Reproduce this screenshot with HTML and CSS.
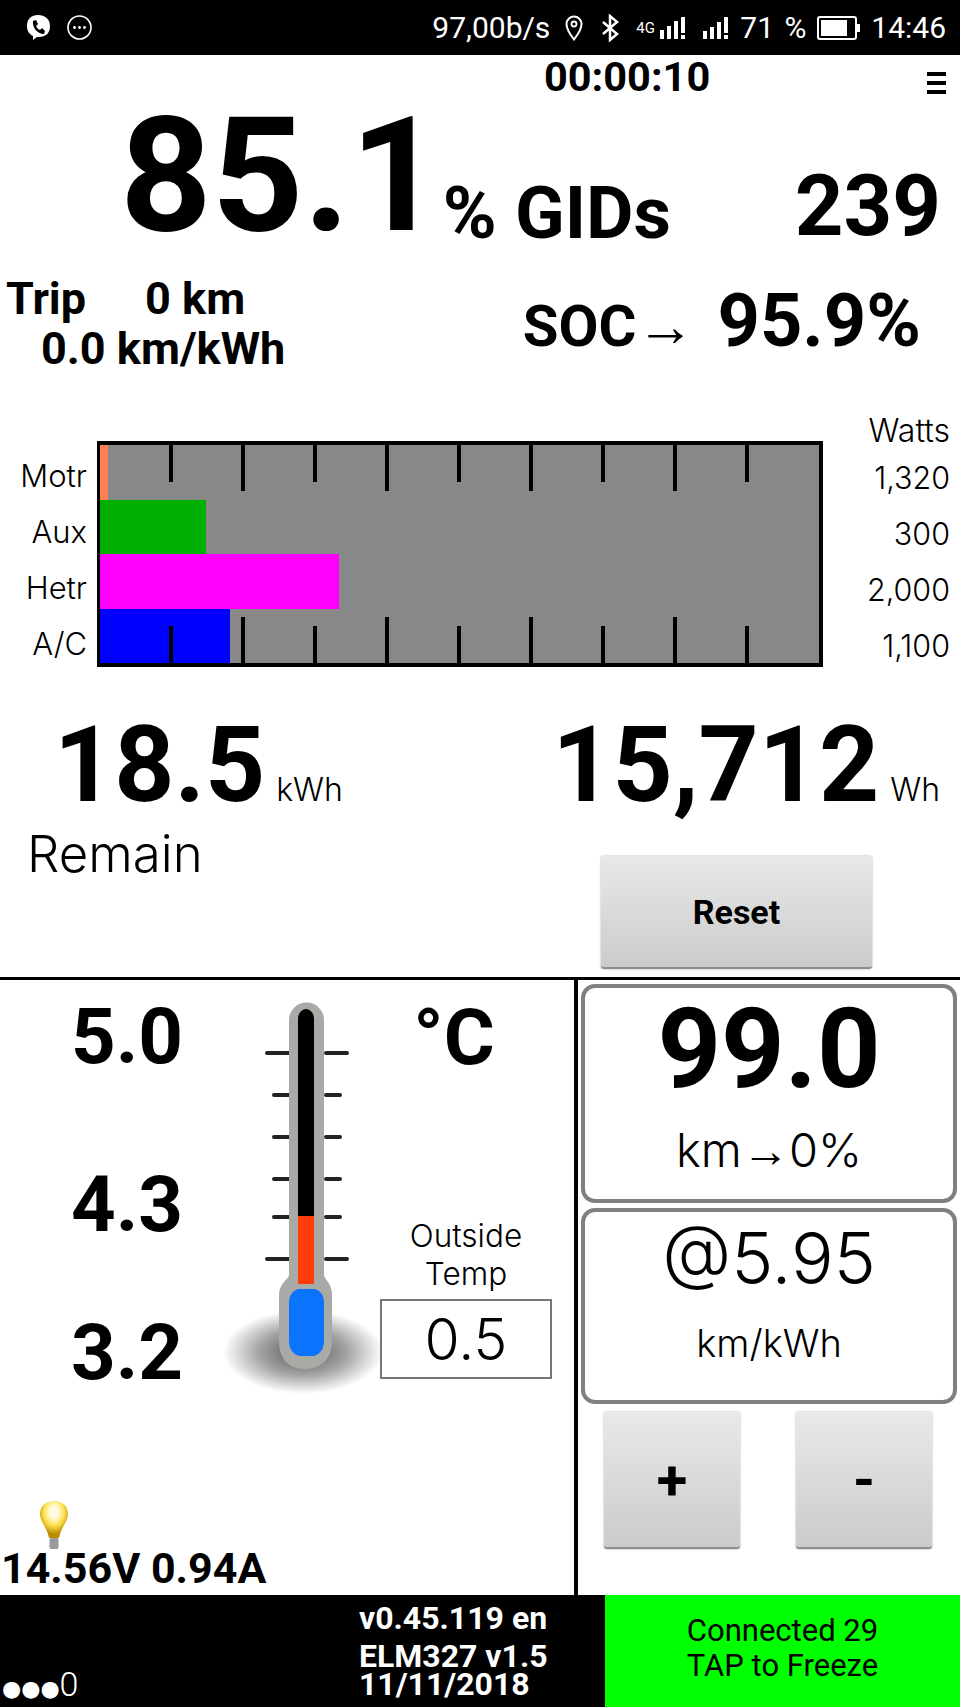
FILE: index.html
```html
<!DOCTYPE html>
<html lang="en">
  <head>
    <meta charset="UTF-8" />
    <title>LeafSpy dash</title>
    <link rel="stylesheet" href="styles.css">
  </head>
  <body>
    <div class="screen">
      <div class="status">
        <svg class="status-app" viewBox="0 0 27 27">
          <path d="M13 1C6 1 2 5 2 12c0 5 2 8 6 10v4l4-3h2c7 0 11-4 11-11S20 1 13 1z" fill="#fff"/>
          <path d="M8 7l3-1 2 4-2 2c1 2 2 3 4 4l2-2 3 3-1 3c-6 0-12-6-11-13z" fill="#000"/>
        </svg>
        <svg class="status-app" viewBox="0 0 27 27">
          <circle cx="13.5" cy="13.5" r="11.5" fill="none" stroke="#fff" stroke-width="1.6"/>
          <circle cx="8.5" cy="13.5" r="1.4" fill="#fff"/>
          <circle cx="13.5" cy="13.5" r="1.4" fill="#fff"/>
          <circle cx="18.5" cy="13.5" r="1.4" fill="#fff"/>
        </svg>
        <div class="status-right">
          <span class="speed">97,00b/s</span>
          <svg class="icon-pin" viewBox="0 0 18 26">
            <path d="M9 1.500a7.500 7.500 0 0 0-7.500 7.500C1.500 15 9 24.500 9 24.500S16.500 15 16.500 9A7.500 7.500 0 0 0 9 1.500z" fill="none" stroke="#fff" stroke-width="2"/>
            <circle cx="9" cy="9" r="2.500" fill="none" stroke="#fff" stroke-width="1.800"/>
          </svg>
          <svg class="icon-bt" viewBox="0 0 20 28">
            <path d="M3 8l14 12-7 6V2l7 6L3 20" fill="none" stroke="#fff" stroke-width="2.500"/>
          </svg>
          <span class="net">4G</span>
          <svg class="icon-signal" viewBox="0 0 72 24">
            <g fill="#fff">
              <rect x="0" y="14" width="4" height="9"/><rect x="7" y="10" width="4" height="13"/>
              <rect x="14" y="5" width="4" height="18"/><rect x="21" y="1" width="4" height="16"/>
              <rect x="21" y="19" width="4" height="4"/>
              <rect x="43" y="15" width="4" height="8"/><rect x="50" y="11" width="4" height="12"/>
              <rect x="57" y="6" width="4" height="17"/><rect x="64" y="1" width="4" height="16"/>
              <rect x="64" y="19" width="4" height="4"/>
            </g>
          </svg>
          <span class="pct">71 %</span>
          <svg class="icon-batt" viewBox="0 0 44 24">
            <rect x="1" y="1" width="38" height="22" rx="2" fill="none" stroke="#fff" stroke-width="2"/>
            <rect x="4" y="4" width="26" height="16" fill="#fff"/>
            <rect x="40" y="8" width="3" height="8" fill="#fff"/>
          </svg>
          <span class="clock">14:46</span>
        </div>
      </div>

      <div class="upper">
        <div class="timer-row">
          <span class="timer">00:00:10</span>
          <div class="menu"><i></i><i></i><i></i></div>
        </div>

        <div class="gids-row">
          <span class="gids-pct">85.1</span>
          <span class="gids-label">% GIDs</span>
          <span class="gids-num">239</span>
        </div>

        <div class="trip-row">
          <div class="trip">
            <div class="trip-top"><span>Trip</span><span>0 km</span></div>
            <div class="trip-eff">0.0 km/kWh</div>
          </div>
          <div class="soc">
            <span class="soc-label">SOC→</span>
            <span class="soc-val">95.9%</span>
          </div>
        </div>

        <div class="watts-title">Watts</div>
        <div class="power">
          <div class="power-labels">
            <span>Motr</span><span>Aux</span><span>Hetr</span><span>A/C</span>
          </div>
          <div class="chart">
            <div class="bar bar-motr"></div>
            <div class="bar bar-aux"></div>
            <div class="bar bar-hetr"></div>
            <div class="bar bar-ac"></div>
            <div class="ticks ticks-top">
              <i></i><i class="long"></i><i></i><i class="long"></i><i></i><i class="long"></i><i></i><i class="long"></i><i></i>
            </div>
            <div class="ticks ticks-bottom">
              <i></i><i class="long"></i><i></i><i class="long"></i><i></i><i class="long"></i><i></i><i class="long"></i><i></i>
            </div>
          </div>
          <div class="power-values">
            <span>1,320</span><span>300</span><span>2,000</span><span>1,100</span>
          </div>
        </div>

        <div class="energy-row">
          <div class="energy energy-left"><b>18.5</b><span>kWh</span></div>
          <div class="energy energy-right"><b>15,712</b><span>Wh</span></div>
        </div>

        <div class="remain-row">
          <span class="remain">Remain</span>
          <button class="btn btn-reset">Reset</button>
        </div>
      </div>

      <div class="lower">
        <div class="lower-left">
          <div class="temps">
            <span>5.0</span><span>4.3</span><span>3.2</span>
          </div>
          <svg class="thermo" viewBox="0 0 170 400">
            <defs>
              <radialGradient id="shade">
                <stop offset="0" stop-color="#555"/>
                <stop offset="0.55" stop-color="#a4a4a4"/>
                <stop offset="1" stop-color="#fff"/>
              </radialGradient>
            </defs>
            <ellipse cx="83" cy="357" rx="80" ry="42" fill="url(#shade)"/>
            <g stroke="#222" stroke-width="4" stroke-linecap="round">
              <path d="M47 58H69M106 58H127"/>
              <path d="M54 100H69M106 100H120"/>
              <path d="M54 142H69M106 142H120"/>
              <path d="M54 184H69M106 184H120"/>
              <path d="M54 222H69M106 222H120"/>
              <path d="M47 264H69M106 264H127"/>
            </g>
            <path d="M69 25a17.500 17.500 0 0 1 35 0V280c0 4 8 8 8 20v46c0 17-10 28-27 28h-1c-16 0-25-11-25-28v-46c0-12 10-16 10-20z" fill="#a9a9a6"/>
            <path d="M78 24c0-6 4-10 8-10s8 4 8 10V221H78z" fill="#000"/>
            <rect x="78" y="221" width="16" height="68" fill="#ff3c0a"/>
            <path d="M78 294h17c6 2 9 7 9 14v38c0 8-4 13-10 15H79c-6-2-10-7-10-15v-38c0-7 3-12 9-14z" fill="#0a74ff"/>
          </svg>
          <div class="outside">
            <div class="deg">°C</div>
            <div class="outside-label">Outside<br>Temp</div>
            <div class="outside-box">0.5</div>
          </div>
          <div class="volts">
            <svg class="bulb" viewBox="0 0 30 50">
              <defs>
                <radialGradient id="glow" cx="0.5" cy="0.3" r="0.6">
                  <stop offset="0.25" stop-color="#fffbe0"/>
                  <stop offset="0.6" stop-color="#ffe14d"/>
                  <stop offset="1" stop-color="#b98c00"/>
                </radialGradient>
              </defs>
              <path d="M15 1C7 1 1 6 1 14c0 8 7 13 9 24h10c2-11 9-16 9-24C29 6 23 1 15 1z" fill="url(#glow)"/>
              <rect x="10.500" y="38" width="9" height="11" rx="2" fill="#9a9a9a"/>
            </svg>
            <div class="volts-text">14.56V 0.94A</div>
          </div>
        </div>
        <div class="lower-right">
          <div class="card card-range">
            <div class="range-num">99.0</div>
            <div class="range-sub">km<span class="arrow">→</span>0%</div>
          </div>
          <div class="card card-eff">
            <div class="eff-num">@5.95</div>
            <div class="eff-sub">km/kWh</div>
          </div>
          <div class="plusminus">
            <button class="btn btn-sq">+</button>
            <button class="btn btn-sq">-</button>
          </div>
        </div>
      </div>

      <div class="footer">
        <div class="dots">●●●<span>0</span></div>
        <div class="version">
          <div class="ver-line">v0.45.119 en</div>
          <div class="elm-line">ELM327 v1.5</div>
          <div class="date-line">11/11/2018</div>
        </div>
        <div class="conn">Connected 29<br>TAP to Freeze</div>
      </div>
    </div>
  </body>
</html>
```

FILE: styles.css
```css
* {
  box-sizing: border-box;
  margin: 0;
  padding: 0;
}

body {
  background-color: #fff;
  color: #000;
  font-family: Roboto, "Liberation Sans", sans-serif;
}

.screen {
  width: 960px;
  height: 1707px;
  display: flex;
  flex-direction: column;
  overflow: hidden;
}

/* status bar */
.status {
  height: 55px;
  background-color: #000;
  color: #fff;
  display: flex;
  align-items: center;
  padding-left: 25px;
  gap: 14px;
}

.status-app {
  width: 27px;
  height: 27px;
}

.status-right {
  margin-left: auto;
  padding-right: 14px;
  display: flex;
  align-items: center;
  font-size: 30px;
  white-space: nowrap;
}

.speed {
  width: 133px;
}

.icon-pin {
  width: 18px;
  height: 26px;
}

.icon-bt {
  width: 20px;
  height: 28px;
  margin-left: 17px;
}

.net {
  font-size: 15px;
  margin-left: 16px;
  width: 24px;
}

.icon-signal {
  width: 72px;
  height: 24px;
}

.pct {
  width: 69px;
  margin-left: 8px;
  word-spacing: 3px;
}

.icon-batt {
  width: 44px;
  height: 24px;
  margin-left: 8px;
}

.clock {
  margin-left: 10px;
}

/* upper panel */
.upper {
  height: 925px;
  border-bottom: 3px solid #000;
}

.timer-row {
  height: 40px;
  position: relative;
  padding: 2px 0 0 544px;
}

.timer {
  font-size: 41.5px;
  font-weight: 700;
  line-height: 40px;
}

.menu {
  position: absolute;
  top: 17px;
  right: 14px;
  width: 19px;
  display: flex;
  flex-direction: column;
  gap: 5px;
}

.menu i {
  height: 4px;
  background-color: #000;
}

.gids-row {
  height: 160px;
  display: flex;
  align-items: flex-start;
  padding-left: 120px;
  font-weight: 700;
}

.gids-pct {
  font-size: 160px;
  line-height: 160px;
  margin-top: 1px;
}

.gids-label {
  font-size: 73px;
  line-height: 73px;
  margin: 82px 0 0 1px;
}

.gids-num {
  font-size: 85px;
  line-height: 85px;
  margin: 69px 19px 0 auto;
}

.trip-row {
  height: 167px;
  display: flex;
  font-weight: 700;
}

.trip {
  font-size: 45px;
  padding-left: 6px;
  padding-top: 19px;
}

.trip-top {
  display: flex;
  gap: 59px;
  line-height: 50px;
}

.trip-eff {
  padding-left: 35px;
  line-height: 50px;
}

.soc {
  margin-left: auto;
  margin-right: 39px;
  padding-top: 22px;
  display: flex;
  align-items: baseline;
  gap: 23px;
}

.soc-label {
  font-size: 58px;
}

.soc-val {
  font-size: 74px;
}

.watts-title {
  height: 27px;
  margin-top: -8px;
  font-family: Inter, sans-serif;
  font-size: 32px;
  font-weight: 300;
  line-height: 33px;
  text-align: right;
  padding-right: 10px;
}

.power {
  display: grid;
  grid-template-columns: 97px 726px 1fr;
  grid-template-rows: 226px;
  height: 226px;
}

.power-labels {
  height: 230px;
  display: grid;
  grid-template-rows: repeat(4, 1fr);
  text-align: right;
  padding: 6px 10px 0 0;
  font-family: Inter, sans-serif;
  font-size: 31px;
  font-weight: 300;
  align-items: center;
}

.chart {
  position: relative;
  border: 4px solid #000;
  border-left-width: 3px;
  background-color: #888;
  display: grid;
  grid-template-rows: repeat(4, 1fr);
}

.bar-motr {
  width: 8px;
  background-color: #ff7f50;
}

.bar-aux {
  width: 106px;
  background-color: #00b000;
}

.bar-hetr {
  width: 239px;
  background-color: #f0f;
}

.bar-ac {
  width: 130px;
  background-color: #00f;
}

.ticks {
  position: absolute;
  left: 69px;
  display: flex;
  gap: 68px;
}

.ticks i {
  width: 4px;
  height: 37px;
  background-color: #000;
}

.ticks i.long {
  height: 46px;
}

.ticks-top {
  top: 0;
  align-items: flex-start;
}

.ticks-bottom {
  bottom: 0;
  align-items: flex-end;
}

.power-values {
  height: 232px;
  display: grid;
  grid-template-rows: repeat(4, 1fr);
  text-align: right;
  padding: 8px 10px 0 0;
  font-family: Inter, sans-serif;
  font-size: 30.5px;
  font-weight: 300;
  align-items: center;
}

.energy-row {
  height: 144px;
  display: flex;
  justify-content: space-between;
  align-items: flex-end;
  padding: 0 20px 0 54px;
}

.energy b {
  font-size: 105px;
  line-height: 90px;
}

.energy span {
  font-family: Inter, sans-serif;
  font-size: 32px;
  font-weight: 300;
  margin-left: 11px;
}

.remain-row {
  display: flex;
  align-items: flex-start;
  padding-left: 27px;
}

.remain {
  font-family: Inter, sans-serif;
  font-size: 51px;
  font-weight: 300;
  margin-top: 12px;
}

.btn {
  background: linear-gradient(#e9e9e9, #cbcbcb);
  border: none;
  border-radius: 3px;
  border-bottom: 2px solid #8d8d8d;
  box-shadow: 0 0 2px #999;
  font-family: Roboto, sans-serif;
  font-weight: 700;
  color: #000;
}

.btn-reset {
  width: 271px;
  height: 113px;
  margin: 45px 88px 0 auto;
  font-size: 34px;
}

/* lower panel */
.lower {
  flex: 1;
  display: flex;
}

.lower-left {
  width: 578px;
  border-right: 4px solid #000;
  position: relative;
  display: flex;
}

.temps {
  width: 220px;
  display: flex;
  flex-direction: column;
  align-items: center;
  padding: 12px 0 0 34px;
  font-size: 78px;
  font-weight: 700;
  line-height: 90px;
}

.temps span:nth-child(2) {
  margin-top: 78px;
}

.temps span:nth-child(3) {
  margin-top: 58px;
}

.thermo {
  width: 170px;
  height: 400px;
  margin-top: 15px;
}

.outside {
  text-align: center;
  width: 172px;
  margin-left: -10px;
}

.deg {
  font-size: 78px;
  font-weight: 700;
  line-height: 90px;
  margin-top: 13px;
  padding-right: 24px;
}

.outside-label {
  font-family: Inter, sans-serif;
  font-size: 31.5px;
  font-weight: 300;
  line-height: 38px;
  margin-top: 134px;
}

.outside-box {
  height: 80px;
  border: 2px solid #777;
  font-family: Inter, sans-serif;
  font-size: 57px;
  font-weight: 300;
  line-height: 78px;
  margin-top: 6px;
}

.volts {
  position: absolute;
  left: 1px;
  bottom: 4px;
}

.bulb {
  display: block;
  width: 30px;
  height: 50px;
  margin: 0 0 -5px 38px;
}

.volts-text {
  font-size: 43px;
  font-weight: 700;
  line-height: 46px;
}

.lower-right {
  flex: 1;
  padding: 4px 3px 0 3px;
}

.card {
  border: 4px solid #808080;
  border-radius: 14px;
  text-align: center;
  font-family: Inter, sans-serif;
  font-weight: 300;
}

.card-range {
  height: 219px;
  margin-bottom: 5px;
}

.range-num {
  font-family: Roboto, sans-serif;
  font-size: 111px;
  font-weight: 700;
  line-height: 120px;
  margin-top: 1px;
}

.range-sub {
  font-size: 47px;
  line-height: 60px;
  margin-top: 11px;
}

.arrow {
  font-family: Roboto, sans-serif;
}

.card-eff {
  height: 196px;
}

.eff-num {
  font-size: 71px;
  line-height: 80px;
  margin-top: 6px;
}

.eff-sub {
  font-size: 38px;
  line-height: 50px;
  margin-top: 20px;
}

.plusminus {
  display: flex;
  gap: 56px;
  padding: 8px 0 0 23px;
}

.btn-sq {
  width: 136px;
  height: 137px;
  font-size: 56px;
}

/* footer */
.footer {
  height: 112px;
  background-color: #000;
  color: #fff;
  display: flex;
}

.dots {
  width: 359px;
  align-self: flex-end;
  font-family: "DejaVu Sans", sans-serif;
  font-size: 22px;
  line-height: 36px;
  padding-left: 2px;
}

.dots span {
  font-family: Roboto, sans-serif;
  font-weight: 300;
  font-size: 34px;
}

.version {
  width: 246px;
  font-size: 32px;
  font-weight: 700;
  line-height: 32px;
  padding-top: 7px;
}

.elm-line {
  margin-top: 6px;
}

.date-line {
  margin-top: -4px;
}

.conn {
  flex: 1;
  background-color: #0f0;
  color: #000;
  text-align: center;
  font-size: 31px;
  line-height: 35px;
  padding-top: 18px;
}
```
